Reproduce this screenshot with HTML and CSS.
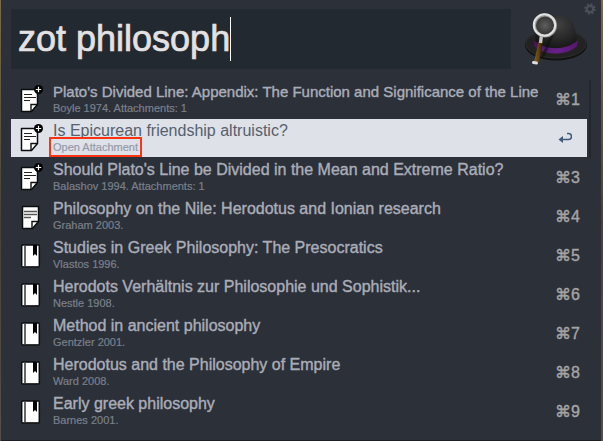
FILE: index.html
```html
<!DOCTYPE html>
<html lang="en">
<head>
<meta charset="utf-8">
<title>Zotero search</title>
<link rel="stylesheet" href="styles.css">
</head>
<body>
<svg class="defs" aria-hidden="true">
  <symbol id="note" viewBox="0 0 24 28">
    <path d="M3.5 4.5h16v15l-6 7h-10z" fill="#fff" stroke="#0b0d10" stroke-width="1.500" stroke-linejoin="round"/>
    <path d="M19 19.500h-6v6.500" fill="none" stroke="#111" stroke-width="1.400"/>
    <path d="M5 9.500h13M5 12.500h13M5 15.500h7" stroke="#555" stroke-width="1.300"/>
  </symbol>
  <symbol id="note-plus" viewBox="0 0 24 28">
    <path d="M2.500 4.500h16v15l-6 7h-10z" fill="#fff" stroke="#0b0d10" stroke-width="1.500" stroke-linejoin="round"/>
    <path d="M18 19.500h-6v6.500" fill="none" stroke="#111" stroke-width="1.400"/>
    <path d="M5 9.500h8M5 12.500h12M5 15.500h6" stroke="#222" stroke-width="1.200"/>
    <circle cx="19.500" cy="4.500" r="4.500" fill="#000"/>
    <path d="M16.800 4.500h5.400M19.500 1.800v5.400" stroke="#fff" stroke-width="1.200"/>
  </symbol>
  <symbol id="book" viewBox="0 0 24 28">
    <rect x="2.700" y="4" width="17.600" height="22" rx="1" fill="#fff" stroke="#0b0d10" stroke-width="1.500"/>
    <path d="M6 5v20" stroke="#666" stroke-width="2"/>
    <path d="M14 4h4v11l-2-2-2 2z" fill="#000"/>
    <path d="M4 26h16" stroke="#222" stroke-width="1"/>
  </symbol>
</svg>
<main class="panel">
  <header class="search">
    <div class="field">
      <input class="query" type="text" aria-label="Search" value="zot philosoph" size="12" spellcheck="false">
      <span class="caret"></span>
    </div>
    <svg class="hat" viewBox="0 4 66 56" role="img" aria-label="Hat and magnifying glass">
      <defs>
        <radialGradient id="crown" cx=".55" cy=".25" r=".75"><stop offset="0" stop-color="#414141"/><stop offset=".6" stop-color="#242424"/><stop offset="1" stop-color="#111"/></radialGradient>
        <radialGradient id="lens"><stop offset="0" stop-color="#5e5e5e"/><stop offset="1" stop-color="#303030"/></radialGradient>
        <linearGradient id="band"><stop offset="0" stop-color="#461557"/><stop offset=".5" stop-color="#68218a"/><stop offset="1" stop-color="#54176e"/></linearGradient>
        <linearGradient id="handle"><stop offset="0" stop-color="#836019"/><stop offset=".5" stop-color="#604411"/><stop offset="1" stop-color="#251904"/></linearGradient>
      </defs>
      <ellipse cx="32" cy="38" rx="31" ry="15.500" fill="#121212"/>
      <ellipse cx="32" cy="37" rx="30" ry="14" fill="#222" stroke="#353535" stroke-width=".7"/>
      <path d="M11 36C12 17 18 8.500 32 8.500c15-1 20 9 21 27.500-8 12-34 13-42 0z" fill="url(#crown)"/>
      <path d="M10 33c10 11 33 11 44 0l-1 6c-9 10-34 10-43 0z" fill="url(#band)"/>
      <path d="M24 33l6-6-9 22-4 2z" fill="#111" opacity=".6"/>
      <path d="M14.500 35h4.500l-4 20h-5z" fill="url(#handle)"/>
      <path d="M17.500 28l-1 8" stroke="#c7c7c7" stroke-width="3.400"/>
      <path d="M9.500 55.500l3 .5" stroke="#ddd" stroke-width="3" stroke-linecap="round"/>
      <circle cx="21" cy="18.500" r="10.500" fill="url(#lens)" stroke="#999" stroke-width="3"/>
      <circle cx="20.500" cy="18" r="10.700" fill="none" stroke="#e1e1e1" stroke-width="2"/>
    </svg>
    <button class="settings" type="button" aria-label="Settings">
      <svg viewBox="0 0 12 12"><g fill="none" stroke="#4b505b"><circle cx="6" cy="6" r="3.200" stroke-width="2.200"/><circle cx="6" cy="6" r="4.800" stroke-width="1.800" stroke-dasharray="2 1.770"/></g></svg>
    </button>
  </header>
  <div class="results">
    <ul class="list">
      <li class="row"><svg class="icon"><use href="#note-plus"/></svg><div class="text"><div class="title long">Plato's Divided Line: Appendix: The Function and Significance of the Line</div><div class="sub">Boyle 1974. Attachments: 1</div></div><kbd class="key">⌘1</kbd></li>
      <li class="row selected"><svg class="icon"><use href="#note-plus"/></svg><div class="text"><div class="title">Is Epicurean friendship altruistic?</div><div class="sub"><span class="marked">Open Attachment</span></div></div><svg class="return" viewBox="0 0 14 12" role="img" aria-label="Return"><path d="M9 1.500h1.500a2.500 2.500 0 0 1 0 6H2" fill="none" stroke="#405a7d" stroke-width="1.600"/><path d="M5 4L.5 7.500 5 11z" fill="#405a7d"/></svg></li>
      <li class="row"><svg class="icon"><use href="#note-plus"/></svg><div class="text"><div class="title">Should Plato's Line be Divided in the Mean and Extreme Ratio?</div><div class="sub">Balashov 1994. Attachments: 1</div></div><kbd class="key">⌘3</kbd></li>
      <li class="row"><svg class="icon"><use href="#note"/></svg><div class="text"><div class="title">Philosophy on the Nile: Herodotus and Ionian research</div><div class="sub">Graham 2003.</div></div><kbd class="key">⌘4</kbd></li>
      <li class="row"><svg class="icon"><use href="#book"/></svg><div class="text"><div class="title">Studies in Greek Philosophy: The Presocratics</div><div class="sub">Vlastos 1996.</div></div><kbd class="key">⌘5</kbd></li>
      <li class="row"><svg class="icon"><use href="#book"/></svg><div class="text"><div class="title">Herodots Verhältnis zur Philosophie und Sophistik...</div><div class="sub">Nestle 1908.</div></div><kbd class="key">⌘6</kbd></li>
      <li class="row"><svg class="icon"><use href="#book"/></svg><div class="text"><div class="title">Method in ancient philosophy</div><div class="sub">Gentzler 2001.</div></div><kbd class="key">⌘7</kbd></li>
      <li class="row"><svg class="icon"><use href="#book"/></svg><div class="text"><div class="title">Herodotus and the Philosophy of Empire</div><div class="sub">Ward 2008.</div></div><kbd class="key">⌘8</kbd></li>
      <li class="row"><svg class="icon"><use href="#book"/></svg><div class="text"><div class="title">Early greek philosophy</div><div class="sub">Barnes 2001.</div></div><kbd class="key">⌘9</kbd></li>
    </ul>
    <div class="scrollbar"></div>
  </div>
</main>
</body>
</html>
```
FILE: styles.css
```css
* { box-sizing: border-box; }
body {
  margin: 0;
  min-height: 100vh;
  display: flex;
  background: linear-gradient(#7d6a43, #4a4038 50%, #5a4c4a);
  font-family: "Liberation Sans", "DejaVu Sans", sans-serif;
}
.defs { position: absolute; width: 0; height: 0; }
.panel {
  flex: 1;
  min-width: 0;
  margin: 0 2px 0 1px;
  background: #2c3039;
  border-bottom: 1px solid #1c2026;
}
.search {
  position: relative;
  display: flex;
  align-items: center;
  gap: 13px;
  padding: 9px 11px 0 10px;
}
.field {
  flex: 1;
  display: flex;
  align-items: center;
  height: 60px;
  padding-left: 7px;
  background: #222930;
}
.query {
  field-sizing: content;
  padding: 0;
  border: 0;
  outline: 0;
  background: transparent;
  color: #e4e1e3;
  font: 36px/44px "Liberation Sans", sans-serif;
  -webkit-text-stroke: 0.7px #e4e1e3;
}
.caret { width: 1px; height: 44px; background: #fff; }
.hat { width: 66px; height: 56px; }
.settings {
  position: absolute;
  top: 3px;
  right: 5px;
  width: 12px;
  height: 12px;
  padding: 0;
  border: 0;
  background: none;
}
.settings svg { display: block; }
.results {
  display: flex;
  gap: 2px;
  padding: 11px 10px 8px;
}
.list {
  flex: 1;
  min-width: 0;
  display: grid;
  grid-template-columns: minmax(0, 1fr);
  gap: 1px;
  margin: 0;
  padding: 0;
  list-style: none;
}
.row {
  display: flex;
  align-items: center;
  height: 38px;
  padding: 0 7px 0 8px;
  color: #a9adb8;
}
.icon { width: 24px; height: 28px; margin-right: 10px; flex: none; }
.text { flex: 1; min-width: 0; padding-bottom: 3px; white-space: nowrap; }
.title { font-size: 16px; line-height: 20px; -webkit-text-stroke: 0.4px; }
.title.long { font-size: 15px; }
.sub { font-size: 11px; line-height: 12px; color: #7a808b; -webkit-text-stroke: 0.2px; }
.key {
  font: 16px/20px "Liberation Sans", "DejaVu Sans", sans-serif;
  color: #a5a4a5;
  padding-top: 2px;
  -webkit-text-stroke: 0.4px;
}
.return { width: 14px; height: 12px; margin-right: 8px; }
.selected { background: #dee1e8; color: #56606e; }
.selected .title { -webkit-text-stroke: 0; }
.selected .sub { color: #949aa8; }
.marked {
  display: inline-block;
  outline: 2px solid #fa3313;
  outline-offset: 2px;
}
.scrollbar { width: 2px; height: 78px; background: #22262e; }
```
